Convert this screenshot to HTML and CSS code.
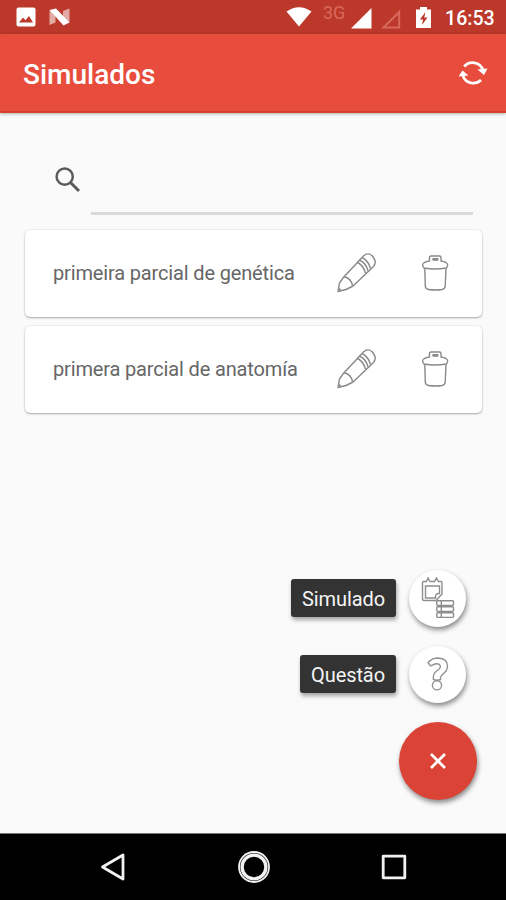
FILE: index.html
```html
<!DOCTYPE html>
<html lang="pt-BR">
<head>
    <meta charset="UTF-8">
    <meta name="viewport" content="width=device-width, initial-scale=1.0">
    <title>Simulados</title>
    <link rel="stylesheet" href="styles.css">
</head>
<body>

    <!-- shared icons -->
    <svg class="icon-defs" width="0" height="0">
        <symbol id="pencil" viewBox="0 0 40 40">
            <path d="M1 38.5 L2.5 30 L7 23.7 L26.5 3 Q30.5 -1 35 2.5 L37 5.5 Q40 10 36 14 L16 33 L9 36.5 Z"/>
            <path d="M7 23.7 Q14 25 15.5 32.5 M1.5 35 L4 37.5"/>
            <path d="M20 9 Q26 12 28.5 20 M22.5 7 Q29 10 31 18 M25 4.5 Q31.5 7.5 33.5 15.5"/>
        </symbol>
        <symbol id="trash" viewBox="0 0 28 36">
            <path d="M3 13 Q0 9.5 3.5 7.5 Q5.5 6.5 8.5 6 V2.5 Q8.5 1 10 1 H18.5 Q20 1 20 2.5 V6 Q23 6.5 25 7.5 Q28 9.5 25.5 13 Q14 15 3 13 Z"/>
            <path d="M12 5 V3.8 H16.8 V5 Z"/>
            <path d="M3.8 13.5 L4.3 31 Q4.5 34 7.5 34.5 Q14 35.5 21 34.5 Q24 34 24.2 31 L25 13.5"/>
        </symbol>
    </svg>

    <div class="status-bar">
        <div class="notifications">
            <svg width="20" height="20" viewBox="0 0 20 20">
                <rect x="0.5" y="0.5" width="19" height="19" rx="2" fill="#fff"/>
                <path d="M3 15.5 L7 10.5 L9.5 13.2 L13 9 L17 15.5 Z" fill="#bc382a"/>
            </svg>
            <svg width="22" height="18" viewBox="0 0 22 18">
                <path d="M0.5 2.5 L6.5 6 V14.5 L0.5 17 Z M14 3 L20.5 0.5 V14.5 L14 10 Z" fill="#e3aaa3"/>
                <path d="M0.5 2 L7 0.5 L20.5 14.5 L14.5 17.5 Z" fill="#fff"/>
            </svg>
        </div>
        <div class="system">
            <svg class="wifi" width="26" height="20" viewBox="0 0 26 20">
                <path d="M0.5 4.5 Q13 -4 25.5 4.5 L13 19.5 Z" fill="#fff"/>
            </svg>
            <span class="network">3G</span>
            <svg class="signal" width="21" height="21" viewBox="0 0 21 21">
                <path d="M0 20.5 L20.5 0 V20.5 Z" fill="#fff"/>
            </svg>
            <svg class="signal-empty" width="20" height="20" viewBox="0 0 20 20">
                <path d="M2.5 18.5 L18.2 3 V18.5 Z" fill="none" stroke="#d9685c" stroke-width="2"/>
            </svg>
            <svg class="battery" width="15" height="21" viewBox="0 0 15 21">
                <path d="M0 2.5 H4 V0 H11 V2.5 H15 V21 H0 Z" fill="#fff"/>
                <path d="M9.5 5 L3.8 12.5 H7 L6 18 L11.5 10.5 H8.2 Z" fill="#bc382a"/>
            </svg>
            <span class="clock">16:53</span>
        </div>
    </div>

    <div class="app-bar">
        <h1>Simulados</h1>
        <svg width="30" height="26" viewBox="0 0 30 26" fill="none" stroke="#fff" stroke-width="2.8">
            <path d="M6.2 6.5 A11 11 0 0 1 25 10"/>
            <path d="M23 20 A11 11 0 0 1 5 16"/>
            <path d="M19.5 9.5 L29.5 8.5 L26 15 Z M0.5 16.5 L4.5 10.5 L10.5 15.5 Z" fill="#fff" stroke="none"/>
        </svg>
    </div>

    <div class="content">
        <div class="search">
            <svg width="26" height="26" viewBox="0 0 26 26" fill="none" stroke="#5c5c5c">
                <circle cx="9.7" cy="9.7" r="8.1" stroke-width="2.5"/>
                <path d="M15.5 15.5 L24 24" stroke-width="3"/>
            </svg>
            <input type="text" class="search-input">
        </div>

        <div class="card">
            <span class="card-title">primeira parcial de genética</span>
            <svg class="line-icon" width="40" height="40"><use href="#pencil"/></svg>
            <svg class="line-icon" width="28" height="36"><use href="#trash"/></svg>
        </div>
        <div class="card">
            <span class="card-title">primera parcial de anatomía</span>
            <svg class="line-icon" width="40" height="40"><use href="#pencil"/></svg>
            <svg class="line-icon" width="28" height="36"><use href="#trash"/></svg>
        </div>

        <div class="fab-menu">
            <div class="fab-item">
                <span class="fab-label">Simulado</span>
                <div class="fab-mini">
                    <svg width="34" height="42" viewBox="0 0 34 42" fill="none" stroke="#8d8d8d" stroke-width="1.4">
                        <path d="M2.5 4.5 H5.5 L7 1 L9 4.5 H13.5 L15.5 1 L17.5 4.5 H20 Q21 4.5 21 6 V17 L15 23.5 H3 Q1.5 23.5 1.5 22 V6 Q1.5 4.5 2.5 4.5 Z"/>
                        <path d="M4.5 21 V9 H18.5 V16.5 Q14 16 14.5 21 Z"/>
                        <rect x="15.8" y="23.8" width="16.7" height="4.6" rx="1"/>
                        <rect x="15.8" y="29.8" width="16.7" height="4.6" rx="1"/>
                        <rect x="15.8" y="35.8" width="16.7" height="4.6" rx="1"/>
                        <path d="M20.3 23.8 V28.4 M20.3 29.8 V34.4 M20.3 35.8 V40.4"/>
                    </svg>
                </div>
            </div>
            <div class="fab-item">
                <span class="fab-label">Questão</span>
                <div class="fab-mini">
                    <svg width="22" height="34" viewBox="0 0 22 34" fill="none" stroke="#929292" stroke-width="1.4">
                        <path d="M1 5.5 Q5 1 11 1 Q20.5 1.5 20.5 9 Q20.5 13.5 16 17 Q13.3 19 13.5 22.5 Q10 24 6.5 22.5 Q5.5 17 9.5 14 Q14 11.5 13.3 8.8 Q12 6 8 7 L3.5 9 Z"/>
                        <circle cx="10" cy="28.3" r="4.6"/>
                    </svg>
                </div>
            </div>
            <div class="fab">
                <svg width="18" height="18" viewBox="0 0 18 18" fill="none" stroke="#fff" stroke-width="2.8">
                    <path d="M2 2 L16 16 M16 2 L2 16"/>
                </svg>
            </div>
        </div>
    </div>

    <div class="nav-bar">
        <svg width="26" height="30" viewBox="0 0 26 30" fill="none" stroke="#f2f2f2" stroke-width="2.8" stroke-linejoin="round">
            <path d="M2.5 15 L23 3 V27 Z"/>
        </svg>
        <svg width="34" height="34" viewBox="0 0 34 34" fill="none" stroke="#f2f2f2">
            <circle cx="17" cy="17" r="15" stroke-width="1.8"/>
            <circle cx="17" cy="17" r="11.9" stroke-width="3.4"/>
        </svg>
        <svg width="26" height="26" viewBox="0 0 26 26" fill="none" stroke="#f2f2f2" stroke-width="2.8" stroke-linejoin="round">
            <rect x="2.2" y="2.2" width="21.6" height="21.6"/>
        </svg>
    </div>

</body>
</html>
```
FILE: styles.css
```css
body {
    font-family: Roboto, sans-serif;
    background-color: #fafafa;
    margin: 0;
    display: flex;
    flex-direction: column;
    height: 100vh;
    overflow: hidden;
}

svg {
    display: block;
    flex-shrink: 0;
}

.icon-defs {
    position: absolute;
}

.status-bar {
    display: flex;
    justify-content: space-between;
    box-sizing: border-box;
    height: 34px;
    padding: 0 11px 0 16px;
    background-color: #bc382a;
    color: #fff;
}

.notifications {
    display: flex;
    align-items: center;
    gap: 13px;
}

.system {
    display: flex;
    align-items: center;
}

.network {
    width: 23px;
    margin: 0 5px 9px 11px;
    font-size: 18px;
    line-height: 20px;
    color: #d9685c;
}

.signal {
    margin: 3px 9px 0 0;
}

.signal-empty {
    margin: 3px 15px 0 0;
}

.battery {
    margin-right: 14px;
}

.clock {
    width: 50px;
    font-size: 19.6px;
    font-weight: 500;
    white-space: nowrap;
    margin-top: 3px;
}

.app-bar {
    display: flex;
    align-items: center;
    justify-content: space-between;
    box-sizing: border-box;
    height: 79px;
    padding: 0 18px 0 23px;
    background-color: #e74c3c;
    border-bottom: 2px solid #d54230;
    box-shadow: 0 1px 3px rgba(0, 0, 0, 0.3);
    z-index: 1;
}

.app-bar h1 {
    margin: 3px 0 0;
    font-size: 28px;
    font-weight: 500;
    color: #fff;
}

.content {
    position: relative;
    flex: 1;
    display: flex;
    flex-direction: column;
    gap: 9px;
    padding: 53px 24px 0 25px;
}

.search {
    display: flex;
    align-items: flex-start;
    gap: 10px;
    height: 55px;
    padding: 1px 9px 0 30px;
    box-sizing: border-box;
}

.search-input {
    flex: 1;
    min-width: 0;
    height: 48px;
    box-sizing: border-box;
    padding: 0;
    border: none;
    border-bottom: 3px solid #dadada;
    background: none;
    outline: none;
    font-size: 20px;
}

.card {
    display: flex;
    align-items: center;
    box-sizing: border-box;
    height: 87px;
    padding: 0 33px 2px 28px;
    background-color: #fff;
    border-radius: 5px;
    box-shadow: 0 1px 2px rgba(0, 0, 0, 0.3), 0 0 2px rgba(0, 0, 0, 0.12);
}

.card-title {
    width: 284px;
    font-size: 20px;
    letter-spacing: -0.15px;
    color: #666;
    white-space: nowrap;
}

.line-icon {
    fill: none;
    stroke: #898989;
    stroke-width: 1.4;
    stroke-linejoin: round;
}

.line-icon + .line-icon {
    margin-left: 44px;
}

.fab-menu {
    position: absolute;
    right: 29px;
    bottom: 33px;
    display: flex;
    flex-direction: column;
    align-items: flex-end;
}

.fab-item {
    display: flex;
    align-items: center;
    gap: 13px;
    margin: 0 11px 19px 0;
}

.fab-label {
    box-sizing: border-box;
    height: 38px;
    margin-bottom: 1px;
    padding: 0 11px;
    background-color: #333;
    border-radius: 3px;
    box-shadow: 1px 3px 4px rgba(0, 0, 0, 0.35);
    color: #f5f5f5;
    font-size: 20px;
    letter-spacing: -0.08px;
    line-height: 40px;
}

.fab-mini,
.fab {
    display: flex;
    align-items: center;
    justify-content: center;
    border-radius: 50%;
    box-shadow: 1px 3px 5px rgba(0, 0, 0, 0.45);
}

.fab-mini {
    width: 57px;
    height: 57px;
    background-color: #fff;
}

.fab-mini svg {
    margin-bottom: 2px;
}

.fab {
    width: 78px;
    height: 78px;
    background-color: #da4336;
}

.nav-bar {
    display: flex;
    align-items: center;
    justify-content: space-between;
    box-sizing: border-box;
    height: 67px;
    padding: 0 99px 0 100px;
    background-color: #000;
    border-top: 1px solid #777;
}
```
